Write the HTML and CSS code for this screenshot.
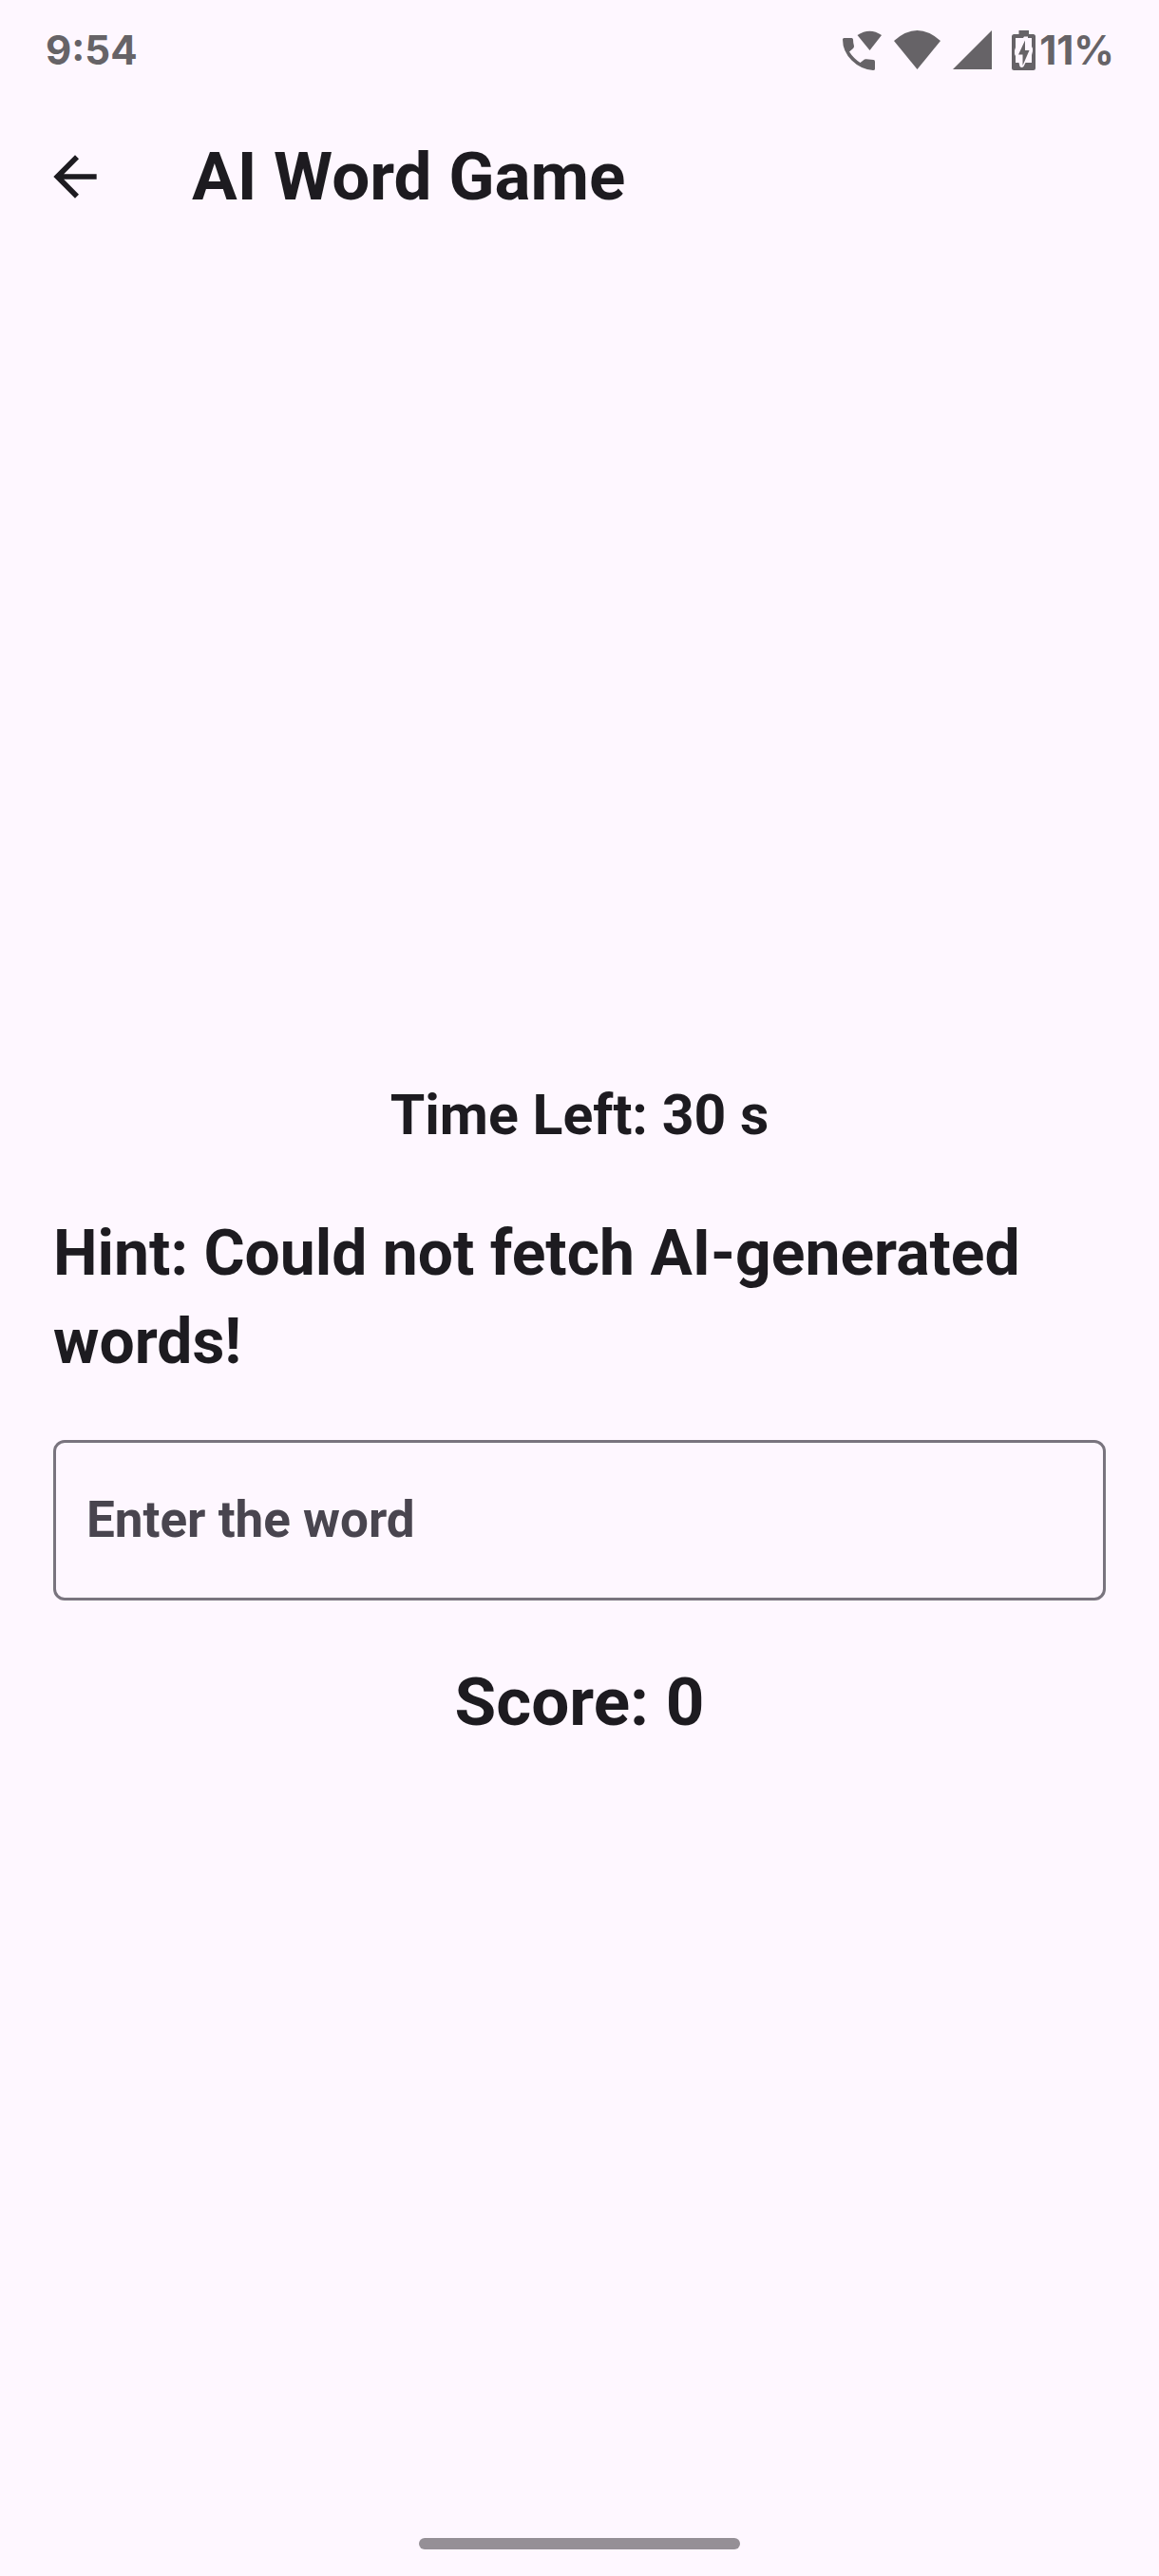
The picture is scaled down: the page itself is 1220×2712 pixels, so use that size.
FILE: index.html
```html
<!DOCTYPE html>
<html lang="en">
<head>
<meta charset="utf-8">
<meta name="viewport" content="width=device-width, initial-scale=1">
<title>AI Word Game</title>
<link rel="stylesheet" href="styles.css">
</head>
<body>
<div class="screen">
  <div class="status-bar">
    <span class="status-time">9:54</span>
    <div class="status-icons">
      <svg class="icon-call" viewBox="0 0 41 42" aria-hidden="true">
        <path d="M0 9.500Q0 8 1.500 8H9.500Q10.800 8 11 9.500Q11 13 12 16.500Q12 18 11 19L7 22.500Q11.500 29.500 18.500 34L23 30.500Q24 30 25 30.200L32.500 31Q34 31.200 34 33V40.500Q34 42 32 42Q19 41 9.500 31.500Q0 22 0 9.500Z"/>
        <path d="M28.500 21L15.500 5Q28.500-3.500 41 5Z"/>
      </svg>
      <svg class="icon-wifi" viewBox="0 0 49 41" aria-hidden="true"><path d="M24.500 41L0 11Q24.500-11 49 11Z"/></svg>
      <svg class="icon-signal" viewBox="0 0 41 41" aria-hidden="true"><path d="M0 41L41 0V41Z"/></svg>
      <div class="battery">
        <svg class="icon-battery" viewBox="0 0 25 42" aria-hidden="true">
          <path fill-rule="evenodd" d="M7.500 0H18V4H22.500Q25 4 25 6.500V39.500Q25 42 22.500 42H2.500Q0 42 0 39.500V6.500Q0 4 2.500 4H7.500ZM4 8V18L3 21V25L4 27V34H7.500L8.500 38Q10.500 40 12.500 38L14.500 34H21V26L22 22V19L21 17V8H17V6.500H13L12 8Z"/>
          <path d="M14 10.500V21H18.500L11.500 37V25.500H7Z"/>
        </svg>
        <span>11%</span>
      </div>
    </div>
  </div>
  <header class="app-bar">
    <button class="back" type="button" aria-label="Back">
      <svg viewBox="0 0 24 24" aria-hidden="true"><path d="M20 11H7.830l5.590-5.590L12 4l-8 8 8 8 1.410-1.410L7.830 13H20v-2z"/></svg>
    </button>
    <h1 class="title">AI Word Game</h1>
  </header>
  <main class="game">
    <p class="timer">Time Left: 30 s</p>
    <p class="hint">Hint: Could not fetch AI-generated words!</p>
    <input class="answer" type="text" aria-label="Enter the word" placeholder="Enter the word">
    <p class="score">Score: 0</p>
  </main>
  <div class="home-indicator"></div>
</div>
</body>
</html>
```
FILE: styles.css
```css
* { box-sizing: border-box; }

body {
  margin: 0;
  background: #fef7ff;
  color: #1d1b20;
  font-family: Roboto, "Liberation Sans", sans-serif;
}

.screen {
  position: relative;
  display: flex;
  flex-direction: column;
  min-height: 100vh;
}

.status-bar {
  display: flex;
  align-items: center;
  justify-content: space-between;
  height: 107px;
  padding: 0 47px 2px 48px;
  color: #666367;
  font: 700 42px/56px Inter, "Open Sans", sans-serif;
}

.status-icons {
  display: flex;
  align-items: center;
  gap: 13px;
}

.status-icons svg { fill: currentColor; }
.icon-call { width: 41px; height: 42px; }
.icon-wifi { width: 49px; height: 41px; }
.icon-signal { width: 41px; height: 41px; }
.icon-battery { width: 25px; height: 42px; }

.battery {
  display: flex;
  align-items: center;
  gap: 4px;
  margin-left: 8px;
}

.app-bar {
  display: flex;
  align-items: center;
  gap: 89px;
  height: 157px;
  padding: 0 45px;
}

.back {
  display: flex;
  padding: 0;
  border: 0;
  background: none;
  color: inherit;
}

.back svg {
  width: 68px;
  height: 68px;
  fill: currentColor;
}

.title {
  margin: 0;
  font-size: 71px;
  font-weight: 700;
  line-height: 100px;
}

.game {
  display: flex;
  flex: 1;
  flex-direction: column;
  justify-content: center;
  gap: 57px;
  padding: 0 56px 2px;
}

.game p {
  margin: 0;
  font-weight: 700;
}

.timer {
  font-size: 59px;
  line-height: 84px;
  text-align: center;
}

.game .hint {
  font-size: 66px;
  line-height: 93px;
}

.answer {
  width: 100%;
  height: 169px;
  padding: 0 32px 2px;
  border: 3px solid #79747e;
  border-radius: 12px;
  background: transparent;
  color: inherit;
  font: 700 53px/74px Roboto, "Liberation Sans", sans-serif;
}

.answer::placeholder {
  color: #49454f;
  opacity: 1;
}

.score {
  font-size: 71px;
  line-height: 100px;
  text-align: center;
}

.home-indicator {
  position: absolute;
  bottom: 28px;
  left: 50%;
  width: 338px;
  height: 12px;
  border-radius: 6px;
  background: #958f96;
  transform: translateX(-50%);
}
```
